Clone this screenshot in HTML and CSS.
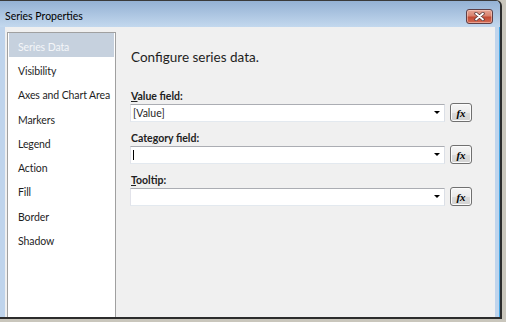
FILE: index.html
```html
<!DOCTYPE html>
<html lang="en">
<head>
    <meta charset="UTF-8">
    <title>Series Properties</title>
    <link rel="stylesheet" href="styles.css">
</head>
<body>
    <div class="window">
        <div class="titlebar">
            <span class="title">Series Properties</span>
            <div class="close">
                <svg width="11" height="9" viewBox="0 0 11 9">
                    <path d="M2 1.5L9 7.5M9 1.5L2 7.5" stroke="#5b3a3a" stroke-width="3.4" stroke-linecap="round"/>
                    <path d="M2 1.5L9 7.5M9 1.5L2 7.5" stroke="#fff" stroke-width="1.8" stroke-linecap="round"/>
                </svg>
            </div>
        </div>
        <div class="frame">
            <div class="client">
                <ul class="pages">
                    <li class="selected">Series Data</li>
                    <li>Visibility</li>
                    <li>Axes and Chart Area</li>
                    <li>Markers</li>
                    <li>Legend</li>
                    <li>Action</li>
                    <li>Fill</li>
                    <li>Border</li>
                    <li>Shadow</li>
                </ul>
                <div class="pane">
                    <h1>Configure series data.</h1>
                    <div class="field">
                        <label><u>V</u>alue field:</label>
                        <div class="row">
                            <div class="combo"><span>[Value]</span><i class="arrow"></i></div>
                            <button class="fx">fx</button>
                        </div>
                    </div>
                    <div class="field">
                        <label>Cate<u>g</u>ory field:</label>
                        <div class="row">
                            <div class="combo"><span class="caret"></span><i class="arrow"></i></div>
                            <button class="fx">fx</button>
                        </div>
                    </div>
                    <div class="field">
                        <label><u>T</u>ooltip:</label>
                        <div class="row">
                            <div class="combo"><i class="arrow"></i></div>
                            <button class="fx">fx</button>
                        </div>
                    </div>
                </div>
            </div>
        </div>
    </div>
</body>
</html>
```
FILE: styles.css
```css
body {
    margin: 0;
    background: #c9c6bc;
    font-family: Lato, "Open Sans", sans-serif;
    font-size: 10.5px;
    color: #1e1e1e;
}
.window {
    width: 502px;
    height: 319px;
    box-sizing: border-box;
    border-top: 1px solid #3a3a3a;
    border-right: 2px solid #2c2c2c;
    border-bottom: 2px solid #2c2c2c;
    border-top-right-radius: 6px;
    background: #bfd4ec;
    display: flex;
    flex-direction: column;
    overflow: hidden;
}
.titlebar {
    height: 26px;
    flex: none;
    box-sizing: border-box;
    padding: 4px 7px 0 5px;
    display: flex;
    align-items: center;
    justify-content: space-between;
    background: linear-gradient(#94b1d4, #c3d8ee);
}
.title {
    font-size: 10.5px;
    color: #000;
}
.close {
    width: 27px;
    height: 15px;
    box-sizing: border-box;
    border: 1px solid #5e3f46;
    border-radius: 3px;
    background: linear-gradient(#e6a595, #d8826e 45%, #c24a33 55%, #d36a53);
    box-shadow: inset 0 0 0 1px rgba(255, 220, 210, 0.5);
    display: flex;
    align-items: center;
    justify-content: center;
}
.frame {
    flex: 1;
    min-height: 0;
    padding: 0 5px;
    display: flex;
    box-shadow: inset -1px 0 #43a5e2;
}
.client {
    flex: 1;
    background: #f0f0f0;
    display: flex;
    padding: 5px 0 0 2px;
}
.pages {
    list-style: none;
    margin: 0;
    padding: 0 1px;
    width: 109px;
    box-sizing: border-box;
    border: 1px solid #a0a0a0;
    border-bottom: none;
    background: #fff;
}
.pages li {
    height: 24.3px;
    line-height: 28px;
    padding-left: 9px;
    white-space: nowrap;
    letter-spacing: -0.1px;
}
.pages li.selected {
    height: 24px;
    background: #c6d1de;
    color: #f4f6f9;
}
.pane {
    flex: 1;
    padding-left: 14px;
}
h1 {
    margin: 16px 0 24px 1px;
    font-size: 13.5px;
    font-weight: normal;
    line-height: 18px;
    color: #1e1e1e;
}
.field {
    margin-top: 10px;
}
.field label {
    display: block;
    height: 13px;
    line-height: 13px;
    margin-left: 1px;
    font-weight: bold;
    color: #222;
}
.row {
    display: flex;
    align-items: center;
    height: 19px;
}
.combo {
    width: 315px;
    height: 18px;
    box-sizing: border-box;
    border: 1px solid;
    border-color: #abadb3 #dbdfe6 #e3e9ef #e2e3ea;
    background: #fff;
    display: flex;
    align-items: center;
    padding-left: 2px;
}
.arrow {
    margin-left: auto;
    margin-right: 4px;
    border-left: 3px solid transparent;
    border-right: 3px solid transparent;
    border-top: 3px solid #000;
}
.caret {
    width: 1px;
    height: 10px;
    background: #000;
}
.fx {
    width: 22px;
    height: 19px;
    margin-left: 5px;
    padding: 0;
    border: 1px solid #707070;
    border-radius: 3px;
    background: linear-gradient(#f6f6f6, #ebebeb 50%, #dcdcdc 51%, #d2d2d2);
    box-shadow: inset 0 0 0 1px #fbfbfb;
    font: italic bold 11px "Liberation Serif", serif;
    color: #000;
}
```
